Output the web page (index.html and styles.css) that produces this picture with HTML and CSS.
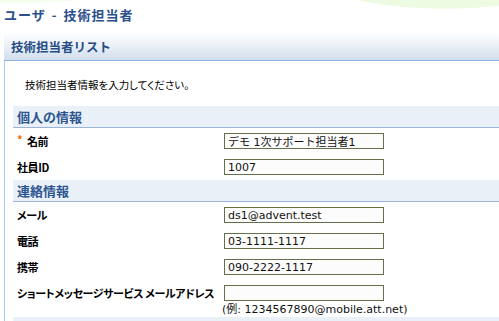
FILE: index.html
```html
<!DOCTYPE html>
<html lang="ja">
<head>
<meta charset="utf-8">
<title>ユーザ - 技術担当者</title>
<link rel="stylesheet" href="styles.css">
</head>
<body>
<h1 class="page-title">ユーザ - 技術担当者</h1>
<div class="panel">
  <div class="panel-head">技術担当者リスト</div>
  <div class="panel-body">
    <p class="intro">技術担当者情報を入力してください。</p>

    <div class="section-head">個人の情報</div>
    <div class="row">
      <label class="label"><span class="req">*</span>名前</label>
      <div class="field"><input class="text-input" type="text" value="デモ 1次サポート担当者1"></div>
    </div>
    <div class="row">
      <label class="label">社員ID</label>
      <div class="field"><input class="text-input" type="text" value="1007"></div>
    </div>

    <div class="section-head">連絡情報</div>
    <div class="row">
      <label class="label">メール</label>
      <div class="field"><input class="text-input" type="text" value="ds1@advent.test"></div>
    </div>
    <div class="row">
      <label class="label">電話</label>
      <div class="field"><input class="text-input" type="text" value="03-1111-1117"></div>
    </div>
    <div class="row">
      <label class="label">携帯</label>
      <div class="field"><input class="text-input" type="text" value="090-2222-1117"></div>
    </div>
    <div class="row row-tall">
      <label class="label">ショートメッセージサービス メールアドレス</label>
      <div class="field">
        <input class="text-input" type="text" value="">
        <div class="hint">(例: 1234567890@mobile.att.net)</div>
      </div>
    </div>
    <div class="section-foot"></div>
  </div>
</div>
</body>
</html>
```

FILE: styles.css
```css
html, body {
  margin: 0;
  padding: 0;
  overflow: hidden;
}
body {
  width: 499px;
  height: 321px;
  font-family: "Noto Sans CJK JP", sans-serif;
  color: #000;
  background:
    radial-gradient(ellipse 115px 25px at 445px -16px, #eefbe3 0, #eefbe3 97%, rgba(238, 251, 227, 0) 100%),
    radial-gradient(ellipse 130px 23px at 20px -20px, #f4fdee 0, #f4fdee 97%, rgba(244, 253, 238, 0) 100%),
    #ffffff;
  background-repeat: no-repeat;
}
.page-title {
  margin: 0;
  padding: 7px 0 0 4px;
  height: 16px;
  font-size: 13px;
  line-height: 16px;
  font-weight: bold;
  color: #2b4f8b;
  letter-spacing: 1px;
  word-spacing: 2px;
}
.panel {
  margin: 10px 0 0 4px;
}
.panel-head {
  height: 27px;
  line-height: 27px;
  padding-left: 7px;
  border-bottom: 1px solid #8cb6e7;
  background: linear-gradient(#ffffff, #d2dfed);
  font-size: 12.5px;
  font-weight: bold;
  color: #284c85;
}
.panel-body {
  border-left: 1px solid #a9c9ee;
  padding-left: 8px;
}
.intro {
  margin: 0;
  padding: 17px 0 14px 12px;
  font-size: 10.5px;
  line-height: 14px;
  font-feature-settings: "palt";
}
.section-head {
  height: 21px;
  line-height: 21px;
  padding-left: 4px;
  background: #e9f0f8;
  border-bottom: 1px solid #9ab3d7;
  font-size: 13px;
  font-weight: bold;
  color: #2c5590;
}
.row {
  display: flex;
  box-sizing: border-box;
  height: 26px;
  padding-top: 5px;
}
.row-tall {
  height: 37px;
}
.label {
  box-sizing: border-box;
  width: 211px;
  padding-left: 4px;
  font-size: 11px;
  line-height: 16px;
  font-weight: bold;
  font-feature-settings: "palt";
  letter-spacing: -0.4px;
  white-space: nowrap;
}
.req {
  display: inline-block;
  width: 10px;
  color: #f06a00;
  font-weight: bold;
  font-size: 11px;
  vertical-align: top;
  line-height: 12px;
}
.field {
  display: flex;
  flex-direction: column;
}
.text-input {
  box-sizing: border-box;
  width: 160px;
  height: 16px;
  margin: 0;
  padding: 0 3px;
  border: 1px solid #646f4c;
  background: #fcfcfc;
  font-family: "DejaVu Sans", "Noto Sans CJK JP", sans-serif;
  font-size: 11px;
  color: #111;
  outline: none;
}
.hint {
  margin: 2px 0 0 -2px;
  font-family: "DejaVu Sans", "Noto Sans CJK JP", sans-serif;
  font-size: 11px;
  line-height: 14px;
  color: #111;
  white-space: nowrap;
}
.section-foot {
  height: 10px;
  background: #e9f0f8;
}
```
